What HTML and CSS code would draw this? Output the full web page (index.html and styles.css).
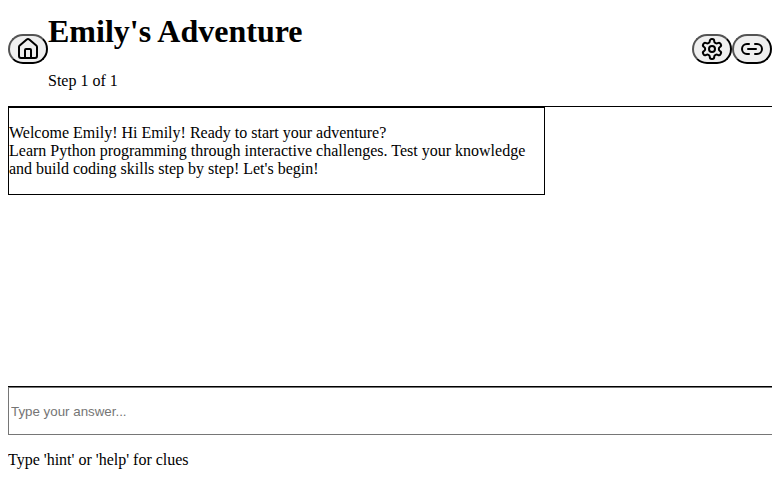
FILE: index.html
```html
<!DOCTYPE html>
<html lang="en">
<head>
<meta charset="utf-8">
<title>Emily's Adventure</title>
<link rel="stylesheet" href="styles.css">
</head>
<body>
<header class="header">
  <div class="group">
    <button class="icon-button" aria-label="Home"><svg class="icon" viewBox="0 0 24 24"><path d="M15 21v-8a1 1 0 0 0-1-1h-4a1 1 0 0 0-1 1v8"/><path d="M3 10a2 2 0 0 1 .709-1.528l7-5.999a2 2 0 0 1 2.582 0l7 5.999A2 2 0 0 1 21 10v9a2 2 0 0 1-2 2H5a2 2 0 0 1-2-2z"/></svg></button>
    <div>
      <h1 class="title">Emily's Adventure</h1>
      <p class="step">Step 1 of 1</p>
    </div>
  </div>
  <div class="group">
    <button class="icon-button" aria-label="Settings"><svg class="icon" viewBox="0 0 24 24"><path d="M12.22 2h-.44a2 2 0 0 0-2 2v.18a2 2 0 0 1-1 1.73l-.43.25a2 2 0 0 1-2 0l-.15-.08a2 2 0 0 0-2.73.73l-.22.38a2 2 0 0 0 .73 2.73l.15.1a2 2 0 0 1 1 1.72v.51a2 2 0 0 1-1 1.74l-.15.09a2 2 0 0 0-.73 2.73l.22.38a2 2 0 0 0 2.73.73l.15-.08a2 2 0 0 1 2 0l.43.25a2 2 0 0 1 1 1.73V20a2 2 0 0 0 2 2h.44a2 2 0 0 0 2-2v-.18a2 2 0 0 1 1-1.73l.43-.25a2 2 0 0 1 2 0l.15.08a2 2 0 0 0 2.73-.73l.22-.39a2 2 0 0 0-.73-2.73l-.15-.08a2 2 0 0 1-1-1.74v-.5a2 2 0 0 1 1-1.74l.15-.09a2 2 0 0 0 .73-2.73l-.22-.38a2 2 0 0 0-2.73-.73l-.15.08a2 2 0 0 1-2 0l-.43-.25a2 2 0 0 1-1-1.73V4a2 2 0 0 0-2-2z"/><circle cx="12" cy="12" r="3"/></svg></button>
    <button class="icon-button" aria-label="Copy link"><svg class="icon" viewBox="0 0 24 24"><path d="M9 17H7A5 5 0 0 1 7 7h2"/><path d="M15 7h2a5 5 0 1 1 0 10h-2"/><path d="M8 12h8"/></svg></button>
  </div>
</header>
<main class="messages">
  <div class="message"><p>Welcome Emily! Hi Emily! Ready to start your adventure?<br>Learn Python programming through interactive challenges. Test your knowledge and build coding skills step by step! Let's begin!</p></div>
</main>
<footer class="footer">
  <input class="answer" type="text" placeholder="Type your answer...">
  <p class="hint">Type 'hint' or 'help' for clues</p>
</footer>
</body>
</html>
```

FILE: styles.css
```css
body {
  margin: 0 8px;
  height: 493px;
  overflow: hidden;
  display: flex;
  flex-direction: column;
  font: 16px "Liberation Serif", serif;
}

.header {
  box-sizing: border-box;
  height: 107px;
  flex: none;
  display: flex;
  align-items: flex-start;
  justify-content: space-between;
  border-bottom: 1px solid #000;
}

.group {
  display: flex;
}

.icon-button {
  box-sizing: border-box;
  width: 40px;
  height: 30px;
  margin-top: 34px;
  padding: 1px 6px;
  display: flex;
  align-items: center;
  justify-content: center;
  border: 2px outset #000;
  border-radius: 15px;
  background: #efefef;
}

.icon {
  flex: none;
  width: 24px;
  height: 24px;
  fill: none;
  stroke: #000;
  stroke-width: 2;
  stroke-linecap: round;
  stroke-linejoin: round;
}

.title {
  margin: 13px 0 22px;
  font-size: 32px;
  line-height: 37px;
}

.step {
  margin: 0;
  line-height: 18px;
}

.messages {
  flex: none;
  height: 279px;
}

.message {
  box-sizing: border-box;
  width: 537px;
  height: 88px;
  border: 1px solid #000;
  line-height: 18px;
}

.footer {
  overflow: hidden;
  border-top: 1px solid #000;
}

.answer {
  box-sizing: border-box;
  display: block;
  width: 800px;
  height: 48px;
  padding: 1px 2px;
  border: 1px solid #767676;
  font: 13.3333px "Liberation Sans", sans-serif;
}

.hint {
  margin: 16px 0;
  line-height: 18px;
}
```
